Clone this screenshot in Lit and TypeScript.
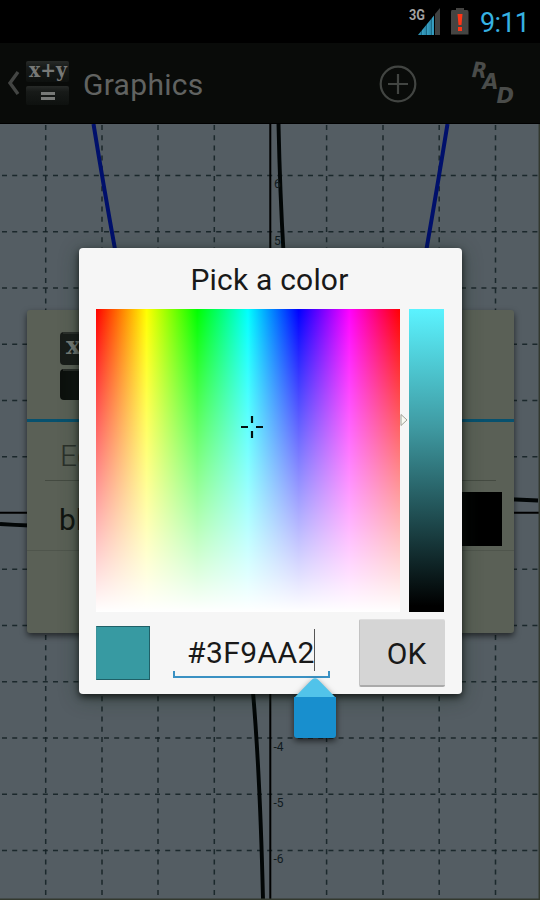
import { LitElement, html, css, svg } from "lit";
import { customElement } from "lit/decorators.js";

@customElement("graph-plot")
class GraphPlot extends LitElement {
  static styles = css`
    :host { display: block; height: 776px; background: #545d63; }
    svg { display: block; }
    .grid { stroke: #121f22; stroke-width: 1.5; stroke-dasharray: 5 5.2; fill: none; opacity: 0.85; }
    .axis { stroke: #000; stroke-width: 2; }
    .curve { fill: none; stroke: #020606; stroke-width: 3.9; }
    .blue { fill: none; stroke: #00106b; stroke-width: 4; }
    .label { font: 12px Roboto, sans-serif; fill: #101a1e; }
  `;
  render() {
    const xs = [45.7, 102, 158, 214.3, 326.6, 383, 439.2, 495.5];
    const ys = [51.5, 107.8, 164, 220.2, 276.5, 332.7, 445.2, 501.5, 557.7, 614, 670.2, 726.5];
    return html`<svg width="540" height="776" viewBox="0 0 540 776">
      ${xs.map((x) => svg`<path class="grid" d="M${x} 1V774"/>`)}
      ${ys.map((y) => svg`<path class="grid" d="M2 ${y}H538"/>`)}
      <path class="axis" d="M270.3 0V775M0 388.7H539"/>
      <path class="blue" d="M93.5 0Q103 59 115.5 128M447.5 0Q438 59 426 128"/>
      <path class="curve" d="M278.5 0Q280 70 283.5 128M253 568Q260 650 263 775M0 400Q15 401 30 401.5M510 375.3Q525 376 538 376.5"/>
      <text class="label" x="274" y="64">6</text>
      <text class="label" x="274" y="121">5</text>
      <text class="label" x="273.5" y="626.5">-4</text>
      <text class="label" x="273.5" y="683">-5</text>
      <text class="label" x="273.5" y="739">-6</text>
      <path d="M0 775.3H540M539.3 0V776" stroke="#33392f" stroke-width="1.5"/>
    </svg>`;
  }
}

@customElement("color-picker")
class ColorPicker extends LitElement {
  static styles = css`
    :host {
      display: block; box-sizing: border-box; width: 383px; height: 446px; padding: 0 18px 0 17px;
      background: #f6f6f6; border-radius: 4px; font-family: Roboto, sans-serif; color: #191919;
      box-shadow: 0 3px 7px rgba(0, 0, 0, 0.65), 0 4px 20px rgba(25, 45, 30, 0.45);
    }
    .title { height: 61px; line-height: 64px; text-align: center; font-size: 30px; letter-spacing: 0.2px; padding-right: 1px; }
    .pickers { display: flex; height: 303px; }
    .field {
      flex: none; width: 304px; display: flex; align-items: center; justify-content: center;
      background: linear-gradient(to bottom, rgba(255,255,255,0), #fff),
        linear-gradient(to right, #f00, #ff0, #0f0, #0ff, #00f, #f0f, #f00);
    }
    .cross { margin: -67px 0 0 8px; }
    .pointer { flex: none; width: 9px; padding-top: 104px; margin-left: -1px; }
    .value { flex: none; width: 35px; margin-left: 1px; background: linear-gradient(#5bf3ff, #3f9aa2 39%, #000 98%); }
    .row { display: flex; padding-top: 7px; }
    .swatch { flex: none; box-sizing: border-box; width: 54px; height: 54px; margin-top: 7px; background: #379aa2; border: 1px solid #1f6067; border-left-color: #3b929a; }
    .entry { flex: none; position: relative; width: 157px; height: 60px; margin-left: 23px; }
    .hex { display: block; line-height: 66px; padding: 1px 0 0 14px; font-size: 30px; white-space: nowrap; letter-spacing: 0.45px; }
    .line { position: absolute; left: 0; top: 52px; }
    .caret { position: absolute; left: 141px; top: 10px; width: 1px; height: 42px; background: #555; }
    .handle { position: absolute; left: 120px; top: 55px; filter: drop-shadow(0 3px 3px rgba(0, 0, 0, 0.6)); }
    .ok {
      flex: none; box-sizing: border-box; width: 86px; height: 68px; margin-left: 29px; padding: 2px 0 0 8px; border: 0;
      border-bottom: 2px solid #aaa; border-left: 1px solid #c3c3c3; border-top: 1px solid #dedede; border-radius: 2px;
      background: #d5d5d5; font: 30px Roboto, sans-serif; color: #191919;
    }
  `;
  render() {
    return html`
      <div class="title">Pick a color</div>
      <div class="pickers">
        <div class="field">
          <svg class="cross" width="24" height="24" viewBox="0 0 24 24"><path d="M12 1V8M12 16V23M1 12H8M16 12H23" stroke="#041010" stroke-width="2.2"/></svg>
        </div>
        <svg class="pointer" width="9" height="14" viewBox="0 0 9 14"><path d="M2 1.5L8 7L2 12.5Z" fill="#f8faf2" stroke="#a0a197"/></svg>
        <div class="value"></div>
      </div>
      <div class="row">
        <div class="swatch"></div>
        <div class="entry">
          <span class="hex">#3F9AA2</span>
          <svg class="line" width="157" height="8" viewBox="0 0 157 8"><path d="M1 0V6H156V0" fill="none" stroke="#3a91c3" stroke-width="2"/></svg>
          <span class="caret"></span>
          <svg class="handle" width="44" height="66" viewBox="0 0 44 66">
            <path d="M1 24L18 6.5Q22 2 26 6.5L43 24Z" fill="#51c3ea"/>
            <path d="M1 23H43V61Q43 64 40 64H4Q1 64 1 61Z" fill="#188fce"/>
          </svg>
        </div>
        <button class="ok">OK</button>
      </div>`;
  }
}

@customElement("app-root")
class AppRoot extends LitElement {
  static styles = css`
    :host { display: block; position: relative; width: 540px; height: 900px; overflow: hidden; background: #000; font-family: Roboto, sans-serif; }
    .status { display: flex; justify-content: flex-end; align-items: flex-start; height: 43px; background: #000; }
    .signal { margin: 6px 8px 0 0; }
    .battery { margin: 7px 10px 0 0; }
    .time { width: 60px; font-size: 27px; line-height: 46px; color: #36b2e2; letter-spacing: -0.7px; }
    .bar { display: flex; align-items: center; box-sizing: border-box; height: 81px; background: #090b09; border-bottom: 1px solid #000; color: #616361; }
    .up { margin-left: 6px; }
    .logo { margin: 0 0 0 5px; }
    .name { flex: 1; margin-left: 13px; padding-top: 2px; font-size: 30px; letter-spacing: 0.3px; }
    .add { margin: 2px 53px 0 0; }
    .rad { margin-right: 24px; overflow: visible; }
    .sheet {
      position: absolute; left: 27px; top: 310px; width: 487px; height: 323px; box-sizing: border-box;
      display: flex; flex-direction: column; background: #5a6056; border-radius: 3px;
      box-shadow: 0 3px 6px rgba(0, 0, 0, 0.6); color: #101410; font-size: 30px;
    }
    .head { height: 112px; box-sizing: border-box; padding: 20px 0 0 32px; border-bottom: 3px solid #07516e; }
    .hint { display: flex; margin: 0 18px; height: 59px; box-sizing: border-box; border-bottom: 1px solid #444a41; line-height: 68px; padding-left: 15px; color: #2b302a; font-weight: 300; }
    .choice { display: flex; justify-content: space-between; height: 70px; box-sizing: border-box; border-bottom: 1px solid #4f554c; padding: 11px 12px 0 32px; line-height: 56px; }
    .black { width: 54px; height: 54px; background: #000; }
    .dialog { position: absolute; left: 79px; top: 248px; }
  `;
  render() {
    return html`
      <div class="status">
        <svg class="signal" width="35" height="30" viewBox="0 0 35 30">
          <defs><linearGradient id="bars" x2="5" gradientUnits="userSpaceOnUse" spreadMethod="repeat"><stop stop-color="#39a2c5"/><stop offset=".7" stop-color="#2b8bad"/><stop offset="1" stop-color="#125a75"/></linearGradient></defs>
          <path d="M11 29L27 9.5V29Z" fill="url(#bars)"/><path d="M28 8L33 2V29H28Z" fill="#3f4141"/>
          <text x="2" y="13.5" fill="#a2a2a2" font-size="15" font-weight="700" font-family="Roboto, sans-serif" textLength="16" lengthAdjust="spacingAndGlyphs">3G</text>
        </svg>
        <svg class="battery" width="20" height="29" viewBox="0 0 20 29">
          <path d="M2 3H6V1H14V3H17Q18.5 3 18.5 5V27.5H1V5Q1 3 2 3Z" fill="#454442"/><path d="M7.5 7H12.5L11.5 18H8.5ZM8 20H12V24H8Z" fill="#ff3516"/>
        </svg>
        <span class="time">9:11</span>
      </div>
      <div class="bar">
        <svg class="up" width="14" height="26" viewBox="0 0 14 26"><path d="M12 2L4 13L12 24" fill="none" stroke="#434543" stroke-width="3.4"/></svg>
        <svg class="logo" width="45" height="45" viewBox="0 0 45 45">
          <defs><linearGradient id="key" x2="0" y2="1"><stop stop-color="#272a28"/><stop offset=".3" stop-color="#171a18"/><stop offset="1" stop-color="#0e110f"/></linearGradient></defs>
          <rect x="1" y="0" width="43" height="21" rx="2" fill="url(#key)"/><rect x="1" y="25" width="43" height="19" rx="2" fill="url(#key)"/>
          <text x="4" y="16" font-family="DejaVu Serif, serif" font-weight="700" font-size="20" fill="#777977" textLength="38" lengthAdjust="spacingAndGlyphs">x+y</text>
          <path d="M16 32.5H30M16 37.5H30" stroke="#777977" stroke-width="3"/>
        </svg>
        <span class="name">Graphics</span>
        <svg class="add" width="38" height="38" viewBox="0 0 38 38"><circle cx="19" cy="19" r="17.3" fill="none" stroke="#424542" stroke-width="2.2"/><path d="M19 9V29M9 19H29" stroke="#424542" stroke-width="2.2"/></svg>
        <svg class="rad" width="46" height="46" viewBox="0 0 46 46" font-family="DejaVu Sans, sans-serif" font-weight="700" font-style="italic" font-size="21.5" fill="#4a4c4a">
          <text transform="rotate(4 9 10)" x="2" y="17.5" textLength="15" lengthAdjust="spacingAndGlyphs">R</text><text x="12.5" y="29" textLength="16" lengthAdjust="spacingAndGlyphs">A</text><text x="26.5" y="43" textLength="17.5" lengthAdjust="spacingAndGlyphs">D</text>
        </svg>
      </div>
      <graph-plot></graph-plot>
      <div class="sheet">
        <div class="head">
          <svg width="70" height="72" viewBox="0 0 70 72">
            <rect x="1" y="2" width="68" height="33" rx="4" fill="#181c19"/><rect x="1" y="39" width="68" height="31" rx="4" fill="#0c100d"/>
            <path d="M4 3H66M4 40H66" stroke="#323632" stroke-width="1.5"/>
            <text x="7" y="24" font-family="DejaVu Serif, serif" font-weight="700" font-size="25" fill="#777c77">x+y</text>
          </svg>
        </div>
        <div class="hint">Equation</div>
        <div class="choice"><span>black</span><span class="black"></span></div>
      </div>
      <color-picker class="dialog"></color-picker>`;
  }
}
